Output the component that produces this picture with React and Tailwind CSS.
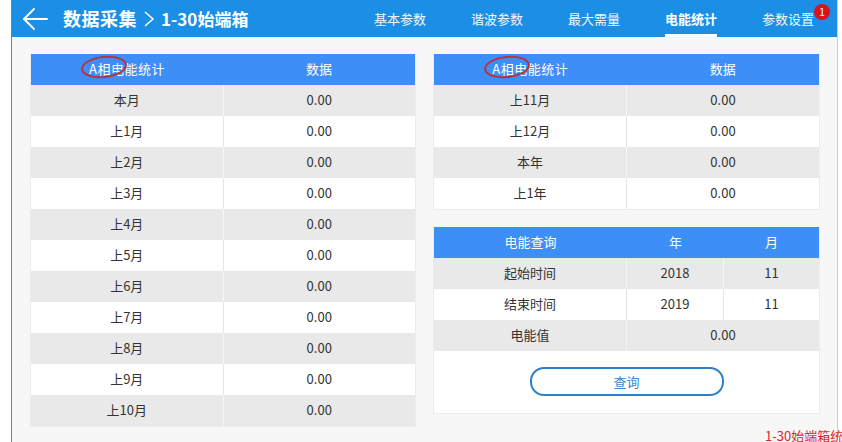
const font = { fontFamily: '"Noto Sans CJK SC", "Noto Sans", sans-serif' };

const leftRows = ["本月", "上1月", "上2月", "上3月", "上4月", "上5月", "上6月", "上7月", "上8月", "上9月", "上10月"];
const rightRows = ["上11月", "上12月", "本年", "上1年"];
const navItems = ["基本参数", "谐波参数", "最大需量", "电能统计", "参数设置"];

const PhaseHeader = () => (
  <span className="relative tracking-[0.5px] pb-[2px]">
    A相电能统计
    <span className="absolute left-[-8px] top-[-3px] w-[46px] h-[22px] rounded-[50%] border-2 border-[#b8323f] rotate-[-6deg]" />
  </span>
);

const StatTable = ({ rows }) => (
  <div className="bg-white border-x border-b border-[#ececec]">
    <div className="flex h-[31px] bg-[#3d8ef6] text-white text-[13px]">
      <div className="flex-1 flex items-center justify-center">
        <PhaseHeader />
      </div>
      <div className="flex-1 flex items-center justify-center pb-[2px]">数据</div>
    </div>
    {rows.map((r, i) => (
      <div
        key={r}
        className={`flex h-[31px] text-[13px] text-[#333] ${i % 2 === 0 ? "bg-[#e9e9e9]" : "bg-white"}`}
      >
        <div
          className={`flex-1 flex items-center justify-center pb-[1px] border-r ${i % 2 === 0 ? "border-[#f6f6f6]" : "border-[#e6e6e6]"}`}
        >
          {r}
        </div>
        <div className="flex-1 flex items-center justify-center pb-[1px]">0.00</div>
      </div>
    ))}
  </div>
);

export default function App() {
  return (
    <div className="w-[842px] h-[442px] bg-white flex overflow-hidden" style={font}>
      <div className="w-[11px] shrink-0 bg-white" />
      <div className="w-[827px] shrink-0 flex flex-col border-l border-[#7d7d7d] border-r border-r-[#cfcfcf] bg-[#f7f7f7]">
        {/* header bar */}
        <div className="h-[37px] shrink-0 bg-[#1b8fe6] flex items-center text-white">
          <svg width="26" height="24" viewBox="0 0 26 24" className="ml-[10px]" fill="none" stroke="white" strokeWidth="1.8" strokeLinecap="round" strokeLinejoin="round">
            <path d="M12 2 L2 12 L12 22" />
            <path d="M2 12 H25" />
          </svg>
          <span className="ml-[15px] text-[18px] font-bold tracking-[0.5px]">数据采集</span>
          <svg width="12" height="18" viewBox="0 0 12 18" className="ml-[6px]" fill="none" stroke="white" strokeWidth="1.5">
            <path d="M2 2 L10 9 L2 16" />
          </svg>
          <span className="ml-[6px] text-[17px] font-bold">1-30始端箱</span>
          <div className="ml-auto mr-[23px] flex h-full gap-[45px] text-[13px]">
            {navItems.map((n) => (
              <div key={n} className="relative h-full flex items-center">
                <span className={n === "电能统计" ? "font-bold" : "text-[#f2f7fd]"}>{n}</span>
                {n === "电能统计" && (
                  <span className="absolute bottom-0 left-0 right-0 h-[3px] bg-white" />
                )}
                {n === "参数设置" && (
                  <span className="absolute top-[4px] right-[-16px] w-[16px] h-[16px] rounded-full bg-[#d8121f] text-[10px] flex items-center justify-center leading-none">
                    1
                  </span>
                )}
              </div>
            ))}
          </div>
        </div>

        {/* body */}
        <div className="flex gap-[17px] pl-[18px] pt-[17px]">
          <div className="w-[386px] shrink-0">
            <StatTable rows={leftRows} />
          </div>
          <div className="w-[387px] shrink-0 flex flex-col">
            <StatTable rows={rightRows} />
            <div className="mt-[17px] bg-white border-x border-b border-[#ececec]">
              <div className="flex h-[31px] bg-[#3d8ef6] text-white text-[13px]">
                <div className="w-[193px] flex items-center justify-center pb-[2px]">电能查询</div>
                <div className="w-[97px] flex items-center justify-center pb-[2px]">年</div>
                <div className="flex-1 flex items-center justify-center pb-[2px]">月</div>
              </div>
              <div className="flex h-[31px] bg-[#e9e9e9] text-[13px] text-[#333]">
                <div className="w-[193px] flex items-center justify-center pb-[1px] border-r border-[#f6f6f6]">起始时间</div>
                <div className="w-[97px] flex items-center justify-center pb-[1px] border-r border-[#f6f6f6]">2018</div>
                <div className="flex-1 flex items-center justify-center pb-[1px]">11</div>
              </div>
              <div className="flex h-[31px] bg-white text-[13px] text-[#333]">
                <div className="w-[193px] flex items-center justify-center pb-[1px] border-r border-[#e6e6e6]">结束时间</div>
                <div className="w-[97px] flex items-center justify-center pb-[1px] border-r border-[#e6e6e6]">2019</div>
                <div className="flex-1 flex items-center justify-center pb-[1px]">11</div>
              </div>
              <div className="flex h-[31px] bg-[#e9e9e9] text-[13px] text-[#333]">
                <div className="w-[193px] flex items-center justify-center pb-[1px] border-r border-[#f6f6f6]">电能值</div>
                <div className="flex-1 flex items-center justify-center pb-[1px]">0.00</div>
              </div>
              <div className="flex justify-center pt-[16px] pb-[17px]">
                <button className="w-[194px] h-[29px] rounded-[14px] border-2 border-[#2f7fc8] bg-white text-[13px] text-[#3a86d6]">
                  查询
                </button>
              </div>
            </div>
            <div className="mt-[15px] ml-[332px] whitespace-nowrap text-[13px] text-[#d8262c] leading-none">
              1-30始端箱统计
            </div>
          </div>
        </div>
      </div>
    </div>
  );
}
